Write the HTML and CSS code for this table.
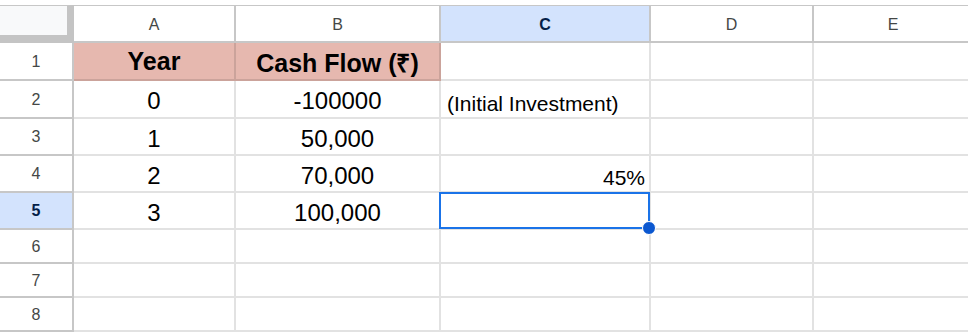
FILE: index.html
```html
<!DOCTYPE html>
<html>
<head>
<meta charset="utf-8">
<link rel="stylesheet" href="styles.css">
</head>
<body>
<div class="sheet">
  <div class="grid">
    <div class="corner"></div>
    <div class="colhdr">A</div>
    <div class="colhdr">B</div>
    <div class="colhdr sel">C</div>
    <div class="colhdr">D</div>
    <div class="colhdr last">E</div>

    <div class="rowhdr">1</div>
    <div class="cell head">Year</div>
    <div class="cell head">Cash Flow (₹)</div>
    <div class="cell"></div>
    <div class="cell"></div>
    <div class="cell last"></div>

    <div class="rowhdr">2</div>
    <div class="cell num">0</div>
    <div class="cell num">-100000</div>
    <div class="cell note">(Initial Investment)</div>
    <div class="cell"></div>
    <div class="cell last"></div>

    <div class="rowhdr">3</div>
    <div class="cell num">1</div>
    <div class="cell num">50,000</div>
    <div class="cell"></div>
    <div class="cell"></div>
    <div class="cell last"></div>

    <div class="rowhdr">4</div>
    <div class="cell num">2</div>
    <div class="cell num">70,000</div>
    <div class="cell pct">45%</div>
    <div class="cell"></div>
    <div class="cell last"></div>

    <div class="rowhdr sel">5</div>
    <div class="cell num">3</div>
    <div class="cell num">100,000</div>
    <div class="cell active"><span class="handle"></span></div>
    <div class="cell"></div>
    <div class="cell last"></div>

    <div class="rowhdr">6</div>
    <div class="cell"></div>
    <div class="cell"></div>
    <div class="cell"></div>
    <div class="cell"></div>
    <div class="cell last"></div>

    <div class="rowhdr">7</div>
    <div class="cell"></div>
    <div class="cell"></div>
    <div class="cell"></div>
    <div class="cell"></div>
    <div class="cell last"></div>

    <div class="rowhdr">8</div>
    <div class="cell"></div>
    <div class="cell"></div>
    <div class="cell"></div>
    <div class="cell"></div>
    <div class="cell last"></div>
  </div>
</div>
</body>
</html>
```
FILE: styles.css
```css
* { box-sizing: border-box; }
html, body { margin: 0; padding: 0; background: #ffffff; }
body { font-family: "Liberation Sans", Arial, sans-serif; overflow: hidden; }

.sheet { padding-top: 5px; width: 968px; height: 332px; overflow: hidden; }

.grid {
  display: grid;
  grid-template-columns: 74px 162px 205px 210px 163px 160px;
  grid-template-rows: 38px 38px 38px 37px 37px 37px 34px 34px 34px;
}

.corner {
  background: #f8f9fa;
  border-top: 1px solid #c7c7c7;
  border-right: 7px solid #c4c4c4;
  border-bottom: 8px solid #c4c4c4;
}

.colhdr {
  display: flex;
  align-items: center;
  justify-content: center;
  font-size: 16px;
  color: #444746;
  background: #ffffff;
  border-top: 1px solid #c7c7c7;
  border-right: 2px solid #c7c7c7;
  border-bottom: 2px solid #c7c7c7;
  padding-top: 2px;
}
.colhdr.sel { background: #d3e3fd; color: #041e49; font-weight: bold; }

.rowhdr {
  display: flex;
  align-items: center;
  justify-content: center;
  font-size: 16px;
  color: #444746;
  background: #ffffff;
  border-right: 2px solid #c7c7c7;
  border-bottom: 2px solid #c7c7c7;
  padding-top: 1px;
}
.rowhdr.sel { background: #d3e3fd; color: #041e49; font-weight: bold; }

.cell {
  position: relative;
  display: flex;
  border-right: 2px solid rgba(0, 0, 0, 0.115);
  border-bottom: 2px solid rgba(0, 0, 0, 0.115);
  color: #000000;
  white-space: nowrap;
}

.cell.head {
  background: #e6b8af;
  align-items: center;
  justify-content: center;
  font-size: 25px;
  font-weight: bold;
  padding-top: 1px;
}

.cell.num {
  align-items: center;
  justify-content: center;
  font-size: 24px;
  padding-top: 4px;
}

.cell.note {
  align-items: flex-end;
  justify-content: flex-start;
  font-size: 21px;
  padding: 0 0 1px 6px;
}

.cell.pct {
  align-items: flex-end;
  justify-content: flex-end;
  font-size: 21px;
  padding: 0 4px 1px 0;
}

.cell.active::after {
  content: "";
  position: absolute;
  top: -1px;
  left: -2px;
  right: -1px;
  bottom: -1px;
  border: 2px solid #1a73e8;
}

.handle {
  position: absolute;
  right: -7px;
  bottom: -7px;
  width: 14px;
  height: 14px;
  border-radius: 50%;
  background: #0b57d0;
  border: 1px solid #ffffff;
  z-index: 2;
}
```
